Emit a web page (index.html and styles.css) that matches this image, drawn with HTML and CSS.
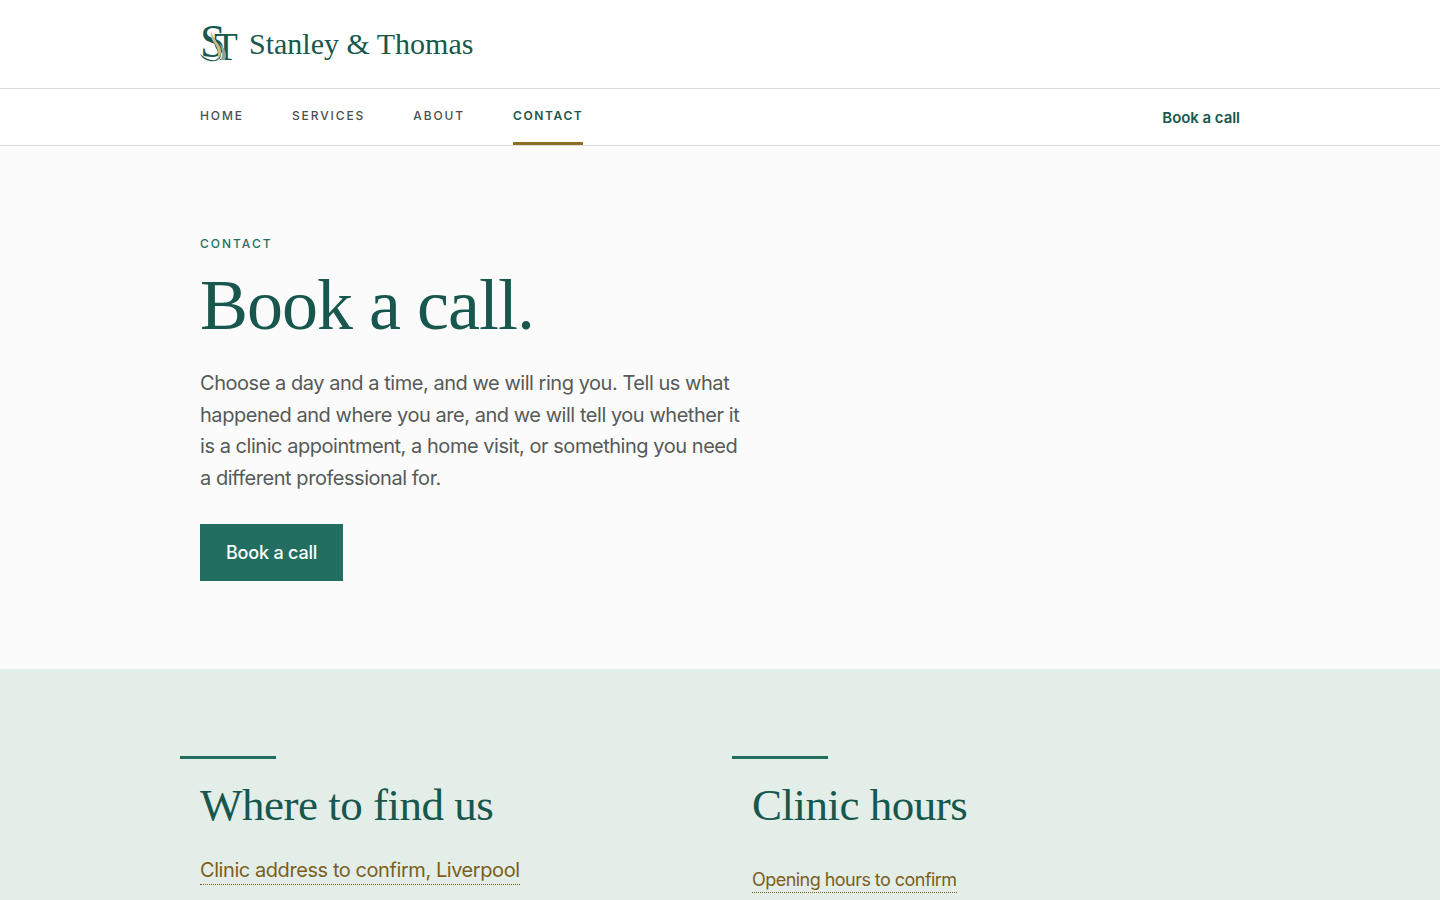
FILE: index.html
```html
<!DOCTYPE html>
<html lang="en">
<head>
<meta charset="utf-8">
<title>Contact | Stanley &amp; Thomas</title>
<link rel="stylesheet" href="styles.css">
</head>
<body>
<header class="brand-bar">
  <div class="wrap">
    <a class="brand" href="#">
      <svg class="logo" viewBox="0 0 40 38" width="40" height="38" aria-hidden="true">
        <text class="logo-t" x="14" y="35">T</text>
        <text class="logo-s" x="0" y="32">S</text>
        <path d="M0 29c3 6 10 8 15 7 6-1 7-6 5-11-2-4-5-8-5-12-2 4 0 8 2 12 2 5 2 9-2 10-5 1-10-2-15-6z" fill="#17574d"/>
        <path d="M11 6c-1 5 1 9 4 13 3 5 4 10 2 16 5-4 5-10 2-15-3-4-6-8-8-14z" fill="#c9b98a"/>
        <path d="M19 18c3 5 4 11 2 17h4c3-6-1-13-6-17z" fill="#8aa898"/>
      </svg>
      <span class="brand-name">Stanley &amp; Thomas</span>
    </a>
  </div>
</header>
<nav class="nav-bar">
  <div class="wrap nav-row">
    <ul class="nav-links">
      <li><a href="#">HOME</a></li>
      <li><a href="#">SERVICES</a></li>
      <li><a href="#">ABOUT</a></li>
      <li><a class="is-active" href="#">CONTACT</a></li>
    </ul>
    <a class="nav-cta" href="#">Book a call</a>
  </div>
</nav>
<main>
  <section class="hero">
    <div class="wrap">
      <p class="eyebrow">CONTACT</p>
      <h1>Book a call.</h1>
      <p class="lead">Choose a day and a time, and we will ring you. Tell us what happened and where you are, and we will tell you whether it is a clinic appointment, a home visit, or something you need a different professional for.</p>
      <a class="button" href="#">Book a call</a>
    </div>
  </section>
  <section class="details">
    <div class="details-grid">
      <article class="panel">
        <h2>Where to find us</h2>
        <p class="line-lg"><a href="#">Clinic address to confirm, Liverpool</a></p>
      </article>
      <article class="panel">
        <h2>Clinic hours</h2>
        <p class="line-sm"><a href="#">Opening hours to confirm</a></p>
      </article>
    </div>
  </section>
</main>
</body>
</html>
```
FILE: styles.css
```css
* { box-sizing: border-box; }
html, body { margin: 0; padding: 0; }
body {
  font-family: Inter, "Liberation Sans", sans-serif;
  color: #4a4f4d;
  background: #fff;
}
a { text-decoration: none; color: inherit; }
.wrap { width: 1040px; margin: 0 auto; }

.brand-bar { height: 89px; border-bottom: 1px solid #dcdcdc; background: #fff; }
.brand-bar .wrap { height: 88px; display: flex; align-items: center; }
.brand { display: flex; align-items: center; gap: 9px; }
.logo { display: block; overflow: visible; }
.logo-s { font: 400 46px "Liberation Serif", serif; fill: #17574d; }
.logo-t { font: 400 39px "Liberation Serif", serif; fill: #17574d; }
.brand-name {
  font-family: "Liberation Serif", serif;
  font-size: 30px;
  color: #17574d;
}

.nav-bar { height: 57px; border-bottom: 1px solid #dcdcdc; background: #fff; }
.nav-row { height: 56px; display: flex; justify-content: space-between; align-items: center; }
.nav-links { display: flex; gap: 48px; list-style: none; margin: 0; padding: 0; height: 56px; }
.nav-links a {
  display: block;
  height: 56px;
  padding-top: 20px;
  font-size: 12px;
  line-height: 14px;
  font-weight: 500;
  letter-spacing: 1.9px;
  color: #4a4f4d;
}
.nav-links a.is-active { color: #17574d; font-weight: 600; letter-spacing: 1.6px; border-bottom: 3px solid #8c6d24; }
.nav-cta { font-size: 15px; font-weight: 600; letter-spacing: -0.05px; color: #17574d; }

.hero { height: 523px; padding-top: 88px; background: #fbfbfb; }
.eyebrow {
  margin: 0;
  font-size: 12px;
  line-height: 20px;
  font-weight: 500;
  letter-spacing: 2px;
  color: #1f6f62;
}
h1 {
  margin: 13px 0 0;
  font-family: "Liberation Serif", serif;
  font-weight: 400;
  font-size: 72px;
  line-height: 76px;
  letter-spacing: -1px;
  color: #17574d;
}
.lead {
  width: 552px;
  margin: 25px 0 0;
  font-size: 20px;
  line-height: 31.6px;
  letter-spacing: -0.46px;
  color: #555a58;
}
.button {
  display: inline-block;
  margin-top: 30px;
  padding: 0 26px;
  height: 57px;
  line-height: 57px;
  font-size: 18px;
  font-weight: 500;
  letter-spacing: -0.2px;
  color: #fff;
  background: #226f62;
}

.details { padding-top: 87px; background: #e4eee8; overflow: hidden; height: 232px; }
.details-grid { margin-left: 180px; display: grid; grid-template-columns: 552px 552px; }
.panel { padding-left: 20px; position: relative; }
.panel::before {
  content: "";
  position: absolute;
  left: 0;
  top: 0;
  width: 96px;
  height: 3px;
  background: #226f62;
}
h2 {
  margin: 0;
  padding-top: 23px;
  font-family: "Liberation Serif", serif;
  font-weight: 400;
  font-size: 45px;
  line-height: 52px;
  letter-spacing: -0.5px;
  color: #17574d;
}
.details a { color: #7a5f1f; border-bottom: 1px dotted #7a5f1f; padding-bottom: 2px; }
.line-lg { margin: 24px 0 0; font-size: 20px; line-height: 30px; letter-spacing: -0.43px; }
.line-sm { margin: 36px 0 0; font-size: 18px; line-height: 26px; letter-spacing: -0.54px; }
```
